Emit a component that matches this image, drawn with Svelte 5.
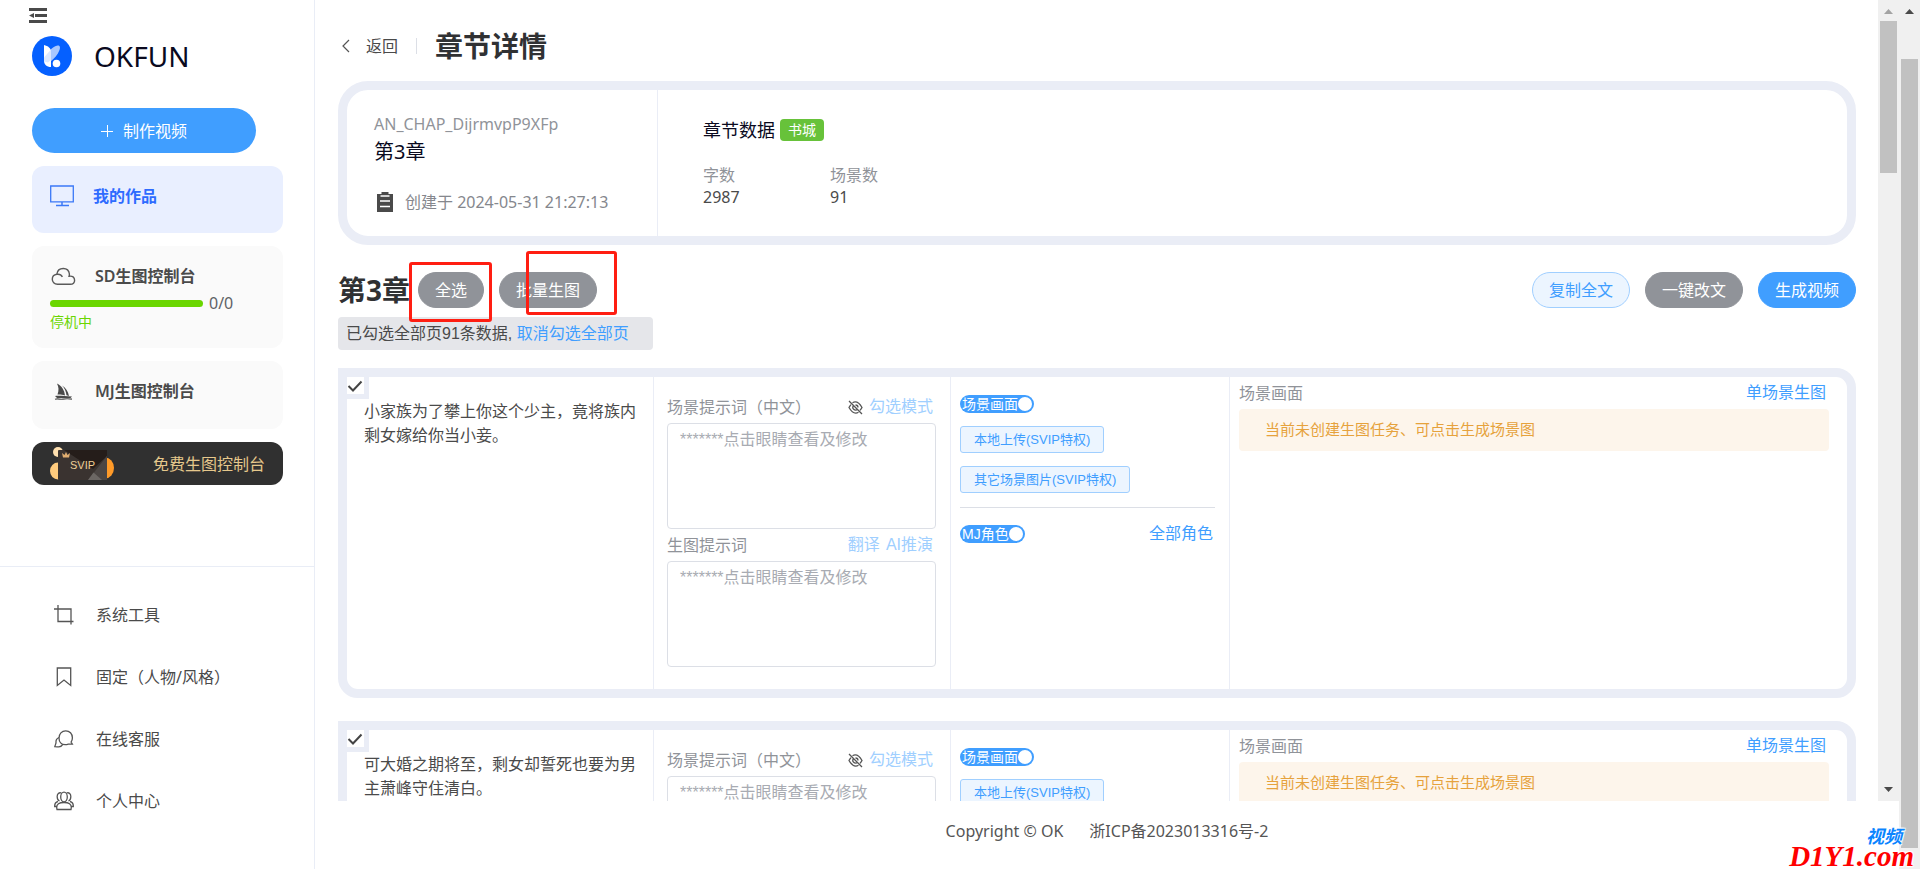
<script lang="ts">
  interface Scene {
    id: number;
    text: string;
    checked: boolean;
    showImage: boolean;
    showRole: boolean;
  }

  const navItems = [
    { icon: 'crop', label: '系统工具' },
    { icon: 'bookmark', label: '固定（人物/风格）' },
    { icon: 'chat', label: '在线客服' },
    { icon: 'users', label: '个人中心' },
  ];

  const stats = [
    { label: '字数', value: 2987 },
    { label: '场景数', value: 91 },
  ];

  const hiddenPrompt = '*******点击眼睛查看及修改';

  let scenes: Scene[] = $state([
    {
      id: 1,
      text: '小家族为了攀上你这个少主，竟将族内剩女嫁给你当小妾。',
      checked: true,
      showImage: true,
      showRole: true,
    },
    {
      id: 2,
      text: '可大婚之期将至，剩女却誓死也要为男主萧峰守住清白。',
      checked: true,
      showImage: true,
      showRole: true,
    },
  ]);

  function setAll(checked: boolean): void {
    scenes.forEach((s) => (s.checked = checked));
  }
</script>

{#snippet toggle(scene: Scene, key: 'showImage' | 'showRole', label: string)}
  <label class="toggle" class:off={!scene[key]}>
    <input type="checkbox" role="switch" bind:checked={scene[key]} />
    <span>{label}</span>
    <i></i>
  </label>
{/snippet}

<div class="app">
  <aside class="sidebar">
    <div class="top">
      <button class="fold" type="button" aria-label="收起菜单">
        <svg width="18" height="15" viewBox="0 0 18 15" fill="#4a4a4a">
          <path d="M0 0h18v3H0zM6 6h12v3H6zM0 12h18v3H0zM5 5v5L0 7.500z" />
        </svg>
      </button>

      <div class="brand">
        <svg width="40" height="40" viewBox="0 0 40 40">
          <circle cx="20" cy="20" r="20" fill="#0560ff" />
          <path d="M13 24C15 17 19 11 25.500 9.500c2.500-.5 3 2 2 4.500-1.800 5-5 8-9.500 12z" fill="#a9c8ff" />
          <path d="M12 9c4 1 7 3 7 7v15c-4.500 0-7-2.500-7-6.500z" fill="#fff" />
          <path d="M12 21.500l7-8V24l-3 2.500-4-1z" fill="#dce8ff" />
          <circle cx="24.500" cy="27.500" r="3.800" fill="#fff" />
        </svg>
        <span>OKFUN</span>
      </div>

      <button class="create" type="button">
        <svg width="12" height="12" viewBox="0 0 12 12" stroke="#fff" stroke-width="1">
          <path d="M0 6.500h12M6.500 0v12" />
        </svg>
        制作视频
      </button>

      <div class="cards">
        <a class="card active" href="#works">
          <span class="card-title">
            <svg width="24" height="22" viewBox="0 0 24 22" fill="none" stroke="#3b78f7">
              <path d="M.7 1h22.600v15.800H.7z" stroke-width="1.300" />
              <path d="M12 17v3M6 20.500h13" stroke-width="1.500" />
            </svg>
            我的作品
          </span>
        </a>

        <a class="card" href="#sd">
          <span class="card-title">
            <svg width="26" height="20" viewBox="0 0 26 20" fill="none" stroke="#5a5a5a" stroke-width="1.400">
              <path d="M7.500 18.300C4.300 18.300 2.300 16 2.300 13.200c0-2.500 1.800-4.500 4.500-4.900C7.300 4.500 10 2.500 13.300 2.500c3.400 0 5.700 2.200 6.100 5.500 0 .9-.1 1.600-.3 2.200 3.300-.6 5.500 1.200 5.500 4 0 2.400-1.700 4.100-4.300 4.100z" />
              <path d="M6.800 8.300c2.500-.4 4.600.7 5.600 2.600" />
            </svg>
            SD生图控制台
          </span>
          <span class="progress"><span class="bar"></span>0/0</span>
          <span class="status">停机中</span>
        </a>

        <a class="card" href="#mj">
          <span class="card-title">
            <svg width="26" height="20" viewBox="0 0 26 20" fill="#4a4a4a">
              <path d="M7 2.500c5 2.500 7.500 7 8 12-3-1-5-1.200-7.500-1 1.500-4 1.300-7.500-.5-11z" />
              <path d="M12 4.500c4 2.500 6 6 7 10.500l-2.500-.8c-.5-4-2-7-4.500-9.700z" />
              <path d="M5 15c5-.5 10 .5 17 .5l-1.500 1.500H7z" />
              <path d="M5 18.300c3-1 5 .4 8-.2s6-.4 9 0" fill="none" stroke="#4a4a4a" stroke-width="1.200" />
            </svg>
            MJ生图控制台
          </span>
        </a>

        <a class="svip" href="#free">
          <svg width="64" height="34" viewBox="0 0 64 34">
            <ellipse cx="8" cy="24" rx="8" ry="8.500" fill="#ffcb7d" />
            <ellipse cx="55" cy="21" rx="9" ry="10.500" fill="#ff9a28" />
            <circle cx="8" cy="5" r="5" fill="#ffe0b0" />
            <rect x="8" y="3" width="49" height="30" rx="1" fill="#3a3330" />
            <path d="M14 3h43v6L43 22z" fill="#251d1a" />
            <path d="M57 9v24H38z" fill="#4c4644" />
            <path d="M43.500 25.500L52 33H38z" fill="#6c6764" />
            <path d="M12 6l2.500 2L16 5l1.500 3L20 6l-1 4.500h-6z" fill="#e0ad70" />
            <text x="20" y="22" font-size="11" fill="#efcf96">SVIP</text>
          </svg>
          <span>免费生图控制台</span>
        </a>
      </div>
    </div>

    <nav>
      {#each navItems as item (item.icon)}
        <a href="#{item.icon}">
          <svg width="20" height="20" viewBox="0 0 20 20" fill="none" stroke="#555" stroke-width="1.300">
            {#if item.icon === 'crop'}
              <path d="M0 4h17v15.500M4 0v16.500h15.500" />
            {:else if item.icon === 'bookmark'}
              <path d="M3.300 1h13.400v17.500L10 13l-6.700 5.500z" />
            {:else if item.icon === 'chat'}
              <path d="M18.300 15c-2 0-3 .3-4 .1-1 .4-2 .6-3 .6C7.300 15.700 5 12.700 5 9c0-4 2.800-7.200 6.700-7.200s6.700 3 6.700 7c0 1.800-.5 3.200-1.300 4.300z" />
              <path d="M5 8.500c-2 .8-3.300 2.500-3 5 .1 1-.9 2.600-1.200 4.200 2 0 2.600.2 4 .1 2 0 3.200-1 4-2.400" />
            {:else}
              <ellipse cx="10" cy="6" rx="3.300" ry="4.800" />
              <path d="M7.500 2C5 1 3 3 3.200 6c.1 2 1 3.500 2.300 4M12.500 2C15 1 17 3 16.800 6c-.1 2-1 3.500-2.300 4M3 18.500c-1.500-6 3-7 7-7s8.500 1 7 7zM4 10.500c-2 .5-3.500 2-3.300 5H3M16 10.500c2 .5 3.500 2 3.300 5H17" />
            {/if}
          </svg>
          {item.label}
        </a>
      {/each}
    </nav>
  </aside>

  <div class="body">
    <div class="viewport">
      <main>
        <header>
          <a class="back" href="#back">
            <svg width="8" height="14" viewBox="0 0 8 14" fill="none" stroke="#555" stroke-width="1.200">
              <path d="M7 1L1 7l6 6" />
            </svg>
            返回
          </a>
          <h1>章节详情</h1>
        </header>

        <section class="detail">
          <div class="detail-main">
            <p class="code">AN_CHAP_DijrmvpP9XFp</p>
            <p class="name">第3章</p>
            <p class="created">
              <svg width="16" height="20" viewBox="0 0 16 20">
                <path d="M0 2h4.500V0h7v2H16v18H0z" fill="#4a4a4a" />
                <path d="M3.500 4h9M3 9h10M3 14.500h10" stroke="#fff" stroke-width="1.500" />
              </svg>
              创建于 2024-05-31 21:27:13
            </p>
          </div>
          <div class="detail-data">
            <p class="data-title">章节数据 <span class="tag">书城</span></p>
            <dl>
              {#each stats as s (s.label)}
                <div>
                  <dt>{s.label}</dt>
                  <dd>{s.value}</dd>
                </div>
              {/each}
            </dl>
          </div>
        </section>

        <div class="toolbar">
          <h2>第3章</h2>
          <span class="marked all">
            <button class="pill" type="button" onclick={() => setAll(true)}>全选</button>
          </span>
          <span class="marked batch">
            <button class="pill" type="button">批量生图</button>
          </span>
          <div class="actions">
            <button class="pill plain" type="button">复制全文</button>
            <button class="pill" type="button">一键改文</button>
            <button class="pill primary" type="button">生成视频</button>
          </div>
        </div>

        <p class="selection">
          已勾选全部页91条数据,
          <button class="link" type="button" onclick={() => setAll(false)}>取消勾选全部页</button>
        </p>

        {#each scenes as scene (scene.id)}
          <article class="scene">
            <div class="col">
              <label class="pick">
                <input type="checkbox" aria-label="选择场景" bind:checked={scene.checked} />
                {#if scene.checked}
                  <svg width="17" height="17" viewBox="0 0 17 17" fill="none" stroke="#444" stroke-width="2">
                    <path d="M1.500 9l4.500 4.500L14.500 4.500" />
                  </svg>
                {/if}
              </label>
              <p class="story">{scene.text}</p>
            </div>

            <div class="col prompts">
              <div class="field-head">
                <label for="cn-{scene.id}">场景提示词（中文）</label>
                <button class="eye" type="button" aria-label="查看">
                  <svg width="15" height="15" viewBox="0 0 15 15" fill="none" stroke="#555" stroke-width="1.300">
                    <path d="M4.500 2.700C8 .8 11 2.300 14 7.500c-.6 1.200-1.300 2.100-2 2.900M10.500 12.300C7 14.200 4 12.700 1 7.500c.6-1.200 1.300-2.100 2-2.900M5.700 5.500a2.600 2.600 0 1 0 3.800 3.800M7.500 5a2.500 2.500 0 0 1 2.500 2.500M1 1l13 13" />
                  </svg>
                </button>
                <button class="link faded" type="button">勾选模式</button>
              </div>
              <textarea id="cn-{scene.id}" placeholder={hiddenPrompt}></textarea>
              <div class="field-head">
                <label for="img-{scene.id}">生图提示词</label>
                <button class="link faded" type="button">翻译</button>
                <button class="link faded" type="button">AI推演</button>
              </div>
              <textarea id="img-{scene.id}" placeholder={hiddenPrompt}></textarea>
            </div>

            <div class="col options">
              {@render toggle(scene, 'showImage', '场景画面')}
              <button class="small" type="button">本地上传(SVIP特权)</button>
              <button class="small" type="button">其它场景图片(SVIP特权)</button>
              <hr />
              <div class="roles">
                {@render toggle(scene, 'showRole', 'MJ角色')}
                <button class="link" type="button">全部角色</button>
              </div>
            </div>

            <div class="col picture">
              <div class="picture-head">
                <span>场景画面</span>
                <button class="link" type="button">单场景生图</button>
              </div>
              <p class="notice">当前未创建生图任务、可点击生成场景图</p>
            </div>
          </article>
        {/each}
      </main>

      <div class="scrollbar inner" aria-hidden="true">
        <svg class="muted" width="9" height="5" viewBox="0 0 9 5"><path d="M0 5L4.500 0 9 5z" /></svg>
        <div class="track"><div class="thumb"></div></div>
        <svg width="9" height="5" viewBox="0 0 9 5"><path d="M0 0l4.500 5L9 0z" /></svg>
      </div>
    </div>

    <footer>
      <span>Copyright © OK</span>
      <a href="#icp">浙ICP备2023013316号-2</a>
    </footer>
  </div>

  <div class="scrollbar outer" aria-hidden="true">
    <svg width="9" height="5" viewBox="0 0 9 5"><path d="M0 5L4.500 0 9 5z" /></svg>
    <div class="track"><div class="thumb"></div></div>
  </div>

  <div class="watermark">
    <span>视频</span>
    <b>D1Y1.com</b>
  </div>
</div>

<style>
  :global(body) {
    margin: 0;
  }

  .app {
    position: relative;
    display: flex;
    height: 100vh;
    overflow: hidden;
    background: #fff;
    color: #4a4a4a;
    font-family: 'Noto Sans', 'Noto Sans CJK SC', sans-serif;
    font-size: 16px;
    line-height: 24px;
  }

  p,
  h1,
  h2,
  dl,
  dd {
    margin: 0;
  }

  a {
    color: inherit;
    text-decoration: none;
  }

  svg {
    display: block;
    flex-shrink: 0;
  }

  button {
    padding: 0;
    border: 0;
    background: none;
    color: inherit;
    font: inherit;
    white-space: nowrap;
    cursor: pointer;
  }

  /* sidebar */
  .sidebar {
    display: flex;
    flex-direction: column;
    flex: 0 0 314px;
    border-right: 1px solid #e9edf6;
  }

  .top {
    box-sizing: border-box;
    display: flex;
    flex-direction: column;
    align-items: flex-start;
    height: 566px;
    padding: 8px 31px 0 29px;
  }

  .brand {
    display: flex;
    align-items: center;
    gap: 22px;
    margin: 13px 0 32px 3px;
    color: #0a0a1e;
    font-size: 28px;
    line-height: 40px;
  }

  .create {
    display: flex;
    align-items: center;
    justify-content: center;
    gap: 10px;
    width: 224px;
    height: 45px;
    margin-left: 3px;
    border-radius: 23px;
    background: #409eff;
    color: #fff;
  }

  .cards {
    display: flex;
    flex-direction: column;
    gap: 13px;
    align-self: stretch;
    margin: 13px 0 0 3px;
  }

  .card {
    box-sizing: border-box;
    display: block;
    min-height: 68px;
    padding: 18px;
    border-radius: 12px;
    background: #fafafa;
  }

  .card.active {
    min-height: 67px;
    background: #e9efff;
    color: #2e6bff;
  }

  .card-title {
    display: flex;
    align-items: center;
    gap: 19px;
    font-weight: 600;
  }

  .progress {
    display: flex;
    align-items: center;
    gap: 6px;
    margin-top: 4px;
    color: #606266;
    line-height: 22px;
  }

  .bar {
    width: 153px;
    height: 7px;
    border-radius: 4px;
    background: #6ad600;
  }

  .status {
    display: block;
    color: #6ad600;
    font-size: 14px;
    line-height: 16px;
  }

  .svip {
    display: flex;
    align-items: center;
    justify-content: space-between;
    height: 43px;
    padding: 0 18px;
    border-radius: 12px;
    background: #303030;
    color: #e6c88c;
  }

  .svip text {
    font-family: 'Liberation Sans', sans-serif;
  }

  nav {
    padding-top: 17px;
    border-top: 1px solid #e9edf6;
  }

  nav a {
    display: flex;
    align-items: center;
    gap: 22px;
    height: 62px;
    padding-left: 54px;
  }

  /* content */
  .body {
    display: flex;
    flex: 1;
    flex-direction: column;
    min-width: 0;
  }

  .viewport {
    display: flex;
    flex: 1;
    min-height: 0;
  }

  main {
    flex: 1;
    min-width: 0;
    padding: 0 22px 0 23px;
    overflow: hidden;
  }

  header {
    display: flex;
    align-items: center;
    padding: 24px 0 13px;
  }

  .back {
    display: flex;
    align-items: center;
    gap: 16px;
    padding: 0 18px 0 4px;
    border-right: 1px solid #dcdfe6;
    line-height: 16px;
  }

  h1,
  h2 {
    color: #303133;
    font-size: 28px;
    font-weight: 700;
  }

  h1 {
    margin-left: 18px;
    line-height: 44px;
  }

  .detail {
    display: flex;
    border: 9px solid #eaedf6;
    border-radius: 30px;
  }

  .detail-main {
    flex: 0 0 283px;
    padding: 22px 0 22px 27px;
    border-right: 1px solid #eaedf6;
  }

  .code {
    color: #909399;
  }

  .name {
    color: #0a0a1e;
    font-size: 20px;
    line-height: 32px;
  }

  .created {
    display: flex;
    gap: 12px;
    align-items: center;
    margin: 22px 0 0 3px;
    color: #85878d;
  }

  .detail-data {
    padding: 28px 0 0 45px;
  }

  .data-title {
    display: flex;
    align-items: center;
    gap: 5px;
    color: #0a0a1e;
    font-size: 18px;
  }

  .tag {
    padding: 0 8px;
    border-radius: 4px;
    background: #67c23a;
    color: #fff;
    font-size: 14px;
    line-height: 22px;
  }

  dl {
    display: flex;
    margin-top: 22px;
    line-height: 22px;
  }

  dl div {
    width: 127px;
  }

  dt {
    color: #909399;
  }

  .toolbar {
    display: flex;
    align-items: center;
    margin-top: 27px;
  }

  .pill {
    height: 36px;
    padding: 0 16px;
    border: 1px solid #909399;
    border-radius: 18px;
    background: #909399;
    color: #fff;
  }

  .pill.primary {
    border-color: #409eff;
    background: #409eff;
  }

  .pill.plain {
    border-color: #a0cfff;
    background: #ecf5ff;
    color: #409eff;
  }

  .actions {
    display: flex;
    gap: 15px;
    margin-left: auto;
  }

  .marked {
    position: relative;
    display: flex;
    margin-left: 8px;
  }

  .marked.batch {
    margin-left: 15px;
  }

  /* red highlight frames around the two batch buttons */
  .marked::after {
    content: '';
    position: absolute;
    border: 3px solid #ff1e12;
    border-radius: 3px;
    pointer-events: none;
  }

  .all::after {
    inset: -10px -8px -14px -9px;
  }

  .batch::after {
    inset: -21px -20px -7px 27px;
  }

  .selection {
    box-sizing: border-box;
    width: fit-content;
    min-width: 315px;
    margin: 9px 0 18px;
    padding: 0 8px;
    border-radius: 4px;
    background: #e5e6ea;
    font-family: 'Liberation Sans', 'Noto Sans CJK SC', sans-serif;
    line-height: 33px;
  }

  .link {
    color: #409eff;
    font-family: 'Liberation Sans', 'Noto Sans CJK SC', sans-serif;
  }

  .link.faded {
    color: #a0cfff;
  }

  /* scene rows */
  .scene {
    display: grid;
    grid-template-columns: 307fr 297fr 279fr 617fr;
    margin-bottom: 23px;
    border: 9px solid #eaedf6;
    border-radius: 0 20px 20px 20px;
  }

  .col {
    min-width: 0;
    border-right: 1px solid #eaedf6;
  }

  .col:last-child {
    border-right: 0;
  }

  .pick {
    position: relative;
    display: block;
    width: 17px;
    height: 17px;
    border: solid #eaedf6;
    border-width: 0 5px 5px 0;
  }

  .pick input,
  .toggle input {
    position: absolute;
    inset: 0;
    width: 100%;
    height: 100%;
    margin: 0;
    opacity: 0;
    cursor: pointer;
  }

  .story {
    padding: 0 14px 0 17px;
  }

  .prompts {
    padding: 14px 14px 22px 13px;
  }

  .field-head {
    display: flex;
    align-items: center;
    gap: 6px;
    height: 32px;
    padding-right: 3px;
    color: #909399;
  }

  .field-head label {
    margin-right: auto;
  }

  textarea {
    box-sizing: border-box;
    display: block;
    width: 100%;
    height: 106px;
    padding: 4px 12px;
    border: 1px solid #dcdfe6;
    border-radius: 4px;
    outline: none;
    color: #606266;
    font-family: 'Liberation Sans', 'Noto Sans CJK SC', sans-serif;
    font-size: 16px;
    line-height: 24px;
    resize: none;
  }

  textarea::placeholder {
    color: #a8abb2;
    opacity: 1;
  }

  .options {
    display: flex;
    flex-direction: column;
    align-items: flex-start;
    padding: 18px 14px 0 9px;
    font-family: 'Liberation Sans', 'Noto Sans CJK SC', sans-serif;
  }

  .toggle {
    position: relative;
    display: flex;
    align-items: center;
    height: 18px;
    padding: 0 2px;
    border-radius: 9px;
    background: #409eff;
    color: #fff;
    font-size: 14px;
    line-height: 18px;
  }

  .toggle.off {
    background: #dcdfe6;
  }

  .toggle i {
    width: 14px;
    height: 14px;
    border-radius: 50%;
    background: #fff;
  }

  .small {
    height: 27px;
    margin-top: 13px;
    padding: 0 13px;
    border: 1px solid #a0cfff;
    border-radius: 3px;
    background: #ecf5ff;
    color: #409eff;
    font-size: 13px;
    line-height: 16px;
  }

  hr {
    align-self: stretch;
    margin: 14px 0;
    border: 0;
    border-top: 1px solid #dcdfe6;
  }

  .roles {
    display: flex;
    align-items: center;
    justify-content: space-between;
    align-self: stretch;
    padding-right: 2px;
  }

  .picture {
    padding: 4px 18px 0 9px;
  }

  .picture-head {
    display: flex;
    justify-content: space-between;
    padding-right: 3px;
    color: #909399;
  }

  .notice {
    margin-top: 4px;
    padding: 8px 26px 10px;
    border-radius: 4px;
    background: #fdf5eb;
    color: #e6a23c;
    font-size: 15px;
  }

  footer {
    display: flex;
    justify-content: center;
    gap: 26px;
    padding: 18px 0 26px;
    color: #555;
  }

  /* scrollbars */
  .scrollbar {
    box-sizing: border-box;
    display: flex;
    flex: 0 0 21px;
    flex-direction: column;
    align-items: center;
    gap: 7px;
    padding: 9px 0;
    background: #f0f0f0;
    fill: #4a4a4a;
  }

  .muted {
    fill: #a3a3a3;
  }

  .track {
    flex: 1;
    width: 17px;
  }

  .thumb {
    background: #c1c1c1;
  }

  .inner .thumb {
    height: 20%;
  }

  .outer .thumb {
    height: 100%;
  }

  .outer .track {
    padding: 38px 0 12px;
  }

  .watermark {
    position: absolute;
    right: 6px;
    bottom: 3px;
    display: flex;
    flex-direction: column;
    align-items: flex-end;
    font-family: 'Liberation Serif', 'Noto Sans CJK SC', serif;
    font-style: italic;
    font-weight: 700;
    text-shadow: 1px 1px 1px #fff, -1px -1px 1px #fff, 1px -1px 1px #fff, -1px 1px 1px #fff;
    pointer-events: none;
  }

  .watermark span {
    margin-right: 12px;
    color: #0a84ff;
    font-size: 18px;
    line-height: 18px;
  }

  .watermark b {
    color: #f00;
    font-size: 29px;
    line-height: 20px;
  }
</style>
